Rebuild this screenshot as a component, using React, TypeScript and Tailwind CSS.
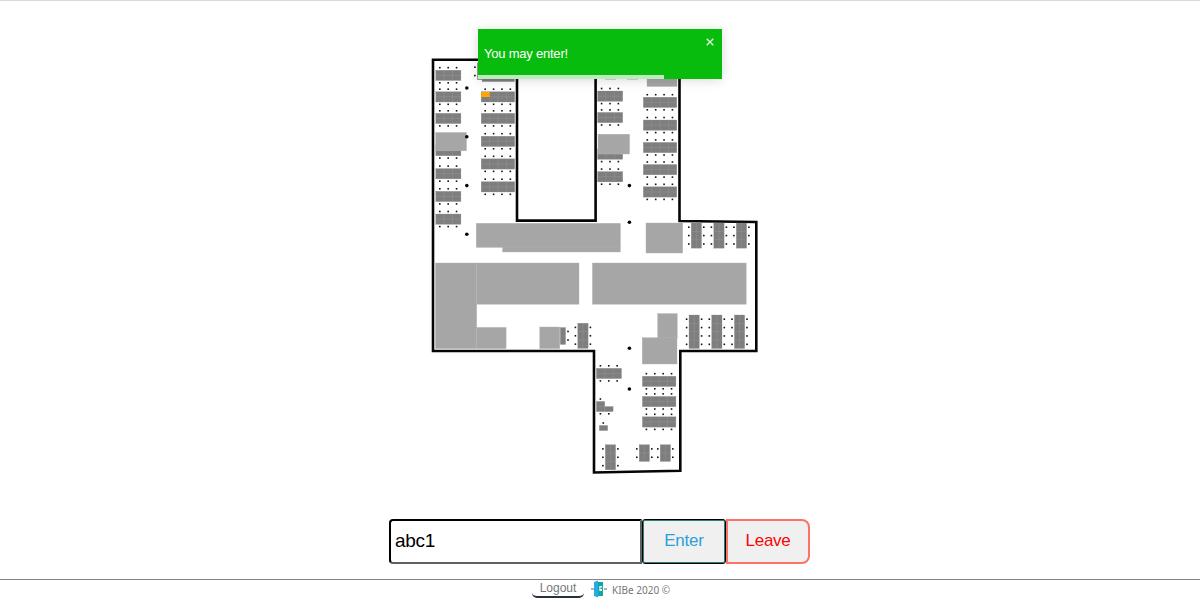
type Box = [x: number, y: number, w: number, h: number];

const wallPoints =
  "433,59.8 517,59.8 517,220.6 595.6,220.6 595.6,59.8 679.5,59.8 679.5,221 756.3,222 756.3,351 680.3,351 680.3,470.7 594,472.5 594,351 433,351";

const desks: { x: number; y: number; cols: number }[] = [
  ...[70.2, 91.7, 113.3, 145.5, 168.6, 191.3, 214].map((y) => ({ x: 435.8, y, cols: 3 })),
  ...[91.7, 113.3, 136.2, 158.8, 181.7].map((y) => ({ x: 481.2, y, cols: 4 })),
  ...[91, 112.4, 149, 171.6].map((y) => ({ x: 597.6, y, cols: 3 })),
  ...[97.2, 120, 142.4, 164.5, 186.8].map((y) => ({ x: 643.3, y, cols: 4 })),
  { x: 596.4, y: 368.3, cols: 3 },
  ...[376.2, 396.4, 416.8].map((y) => ({ x: 642.4, y, cols: 4 })),
];

const columns: { x: number; y: number; rows: number }[] = [
  { x: 477.3, y: 63, rows: 2 },
  ...[691.2, 713.8, 736.3].map((x) => ({ x, y: 223, rows: 3 })),
  ...[689, 711.7, 734.4].map((x) => ({ x, y: 315, rows: 4 })),
  { x: 577.8, y: 323.2, rows: 3 },
  { x: 605.3, y: 444.7, rows: 3 },
  { x: 639.2, y: 444.7, rows: 2 },
  { x: 660.2, y: 444.7, rows: 2 },
];

const rooms: Box[] = [
  [435.7, 132.5, 30.8, 18.3],
  [598, 134.2, 31.6, 19.8],
  [647, 66, 30, 20.5],
  [476.2, 223.3, 144.2, 24.1],
  [502.6, 247, 117.8, 5],
  [646, 223, 36.7, 30],
  [435.5, 263, 41.2, 85.6],
  [476.8, 263, 102.2, 41.2],
  [476.7, 327.4, 29.4, 21.2],
  [539.8, 327, 20, 21.6],
  [592.4, 263, 153.8, 41.2],
  [657.7, 313.6, 19.5, 24.6],
  [642.2, 337.7, 34.8, 26.3],
];

const smallDesks: Box[] = [
  [482, 71.4, 32.6, 10.2],
  [560.3, 327.5, 5.3, 17],
  [596.4, 401.4, 8.4, 10.2],
  [604.8, 406.5, 8.3, 5.1],
  [599.3, 425.4, 8.4, 5.2],
];

const looseSeats = [
  [568, 331.5], [568, 340], [600.4, 399], [600.4, 413.8], [608.8, 413.8], [603.3, 423],
];

const pillars = [
  [466.8, 88], [466.8, 136.7], [466.8, 185.6], [466.8, 234.3],
  [629.4, 185.6], [629.4, 222.3], [629.4, 348.3], [629.4, 389],
];

const step = 8.38;

function Seat({ x, y }: { x: number; y: number }) {
  return <rect x={x - 0.8} y={y - 0.8} width={1.6} height={1.6} fill="#111" />;
}

function Desk({ x, y, w, h, nx, ny }: { x: number; y: number; w: number; h: number; nx: number; ny: number }) {
  return (
    <g>
      <rect x={x} y={y} width={w} height={h} fill="#7e7e7e" stroke="#929292" strokeWidth={0.3} />
      {Array.from({ length: nx - 1 }, (_, i) => (
        <path key={"v" + i} d={`M${x + (w * (i + 1)) / nx} ${y}v${h}`} stroke="#a0a0a0" strokeWidth={0.35} />
      ))}
      {Array.from({ length: ny - 1 }, (_, i) => (
        <path key={"h" + i} d={`M${x} ${y + (h * (i + 1)) / ny}h${w}`} stroke="#a0a0a0" strokeWidth={0.35} />
      ))}
    </g>
  );
}

function FloorPlan() {
  return (
    <svg viewBox="425 50 340 430" width="340" height="430" className="block shrink-0">
      <polygon points={wallPoints} fill="#fff" stroke="#050505" strokeWidth={2.6} />
      {desks.map((d) => (
        <g key={`${d.x}-${d.y}`}>
          <Desk x={d.x} y={d.y} w={d.cols * step} h={10.3} nx={d.cols} ny={2} />
          {Array.from({ length: d.cols }, (_, i) => (
            <g key={i}>
              <Seat x={d.x + 4 + i * step} y={d.y - 2.5} />
              <Seat x={d.x + 4 + i * step} y={d.y + 12.6} />
            </g>
          ))}
        </g>
      ))}
      {columns.map((c) => (
        <g key={`${c.x}-${c.y}`}>
          <Desk x={c.x} y={c.y} w={10.3} h={c.rows * step} nx={2} ny={c.rows} />
          {Array.from({ length: c.rows }, (_, i) => (
            <g key={i}>
              <Seat x={c.x - 2.4} y={c.y + 4.2 + i * step} />
              <Seat x={c.x + 12.6} y={c.y + 4.2 + i * step} />
            </g>
          ))}
        </g>
      ))}
      {smallDesks.map(([x, y, w, h]) => (
        <Desk key={`${x}-${y}`} x={x} y={y} w={w} h={h} nx={1} ny={h > 8 ? 2 : 1} />
      ))}
      {rooms.map(([x, y, w, h]) => (
        <rect key={`${x}-${y}`} x={x} y={y} width={w} height={h} fill="#a6a6a6" stroke="#b3b3b3" strokeWidth={0.4} />
      ))}
      <path d="M605 79.2h11M627 79.2h11" stroke="#c4c4c4" strokeWidth={1} />
      {looseSeats.map(([x, y]) => (
        <Seat key={`${x}-${y}`} x={x} y={y} />
      ))}
      {pillars.map(([x, y]) => (
        <circle key={`${x}-${y}`} cx={x} cy={y} r={1.8} fill="#050505" />
      ))}
      <rect x={481.2} y={92} width={8.4} height={5} fill="#ffa500" />
    </svg>
  );
}

function Toast() {
  return (
    <div
      role="alert"
      className="absolute left-[478px] top-[28px] flex h-[50px] w-[244px] flex-col bg-[#07bc0c] text-white shadow-[0_1px_10px_0_rgba(0,0,0,0.1),0_2px_15px_0_rgba(0,0,0,0.05)]"
    >
      <div className="flex h-[46px] justify-between pl-[6px] pr-[8px]">
        <span className="pt-[16px] text-[13px] leading-[18px] tracking-[-0.22px]">You may enter!</span>
        <svg viewBox="0 0 8 8" className="mt-[9px] size-[8px]" aria-label="close">
          <path d="M.7.7l6.6 6.6M7.3.7L.7 7.3" stroke="#dcf6dd" strokeWidth="1.4" />
        </svg>
      </div>
      <div className="h-[4px] w-[186px] bg-[#bcebbd]" />
    </div>
  );
}

function DoorLogo() {
  return (
    <svg viewBox="0 0 16 18" className="h-[18px] w-[16px] shrink-0">
      <path d="M0 9h3M13 9h3" stroke="#929ba1" strokeWidth="1.3" />
      <path d="M6 2h6v14H6z" fill="#12a5a5" />
      <path d="M3 2l4-1.5v17L3 16z" fill="#29abe2" />
      <path d="M8.3 6h2.8v5H8.3z" fill="#e9f8f8" />
      <path d="M9.5 7.5h1.6V9H9.5z" fill="#12a5a5" />
    </svg>
  );
}

export default function App() {
  return (
    <div className="relative flex h-[600px] w-[1200px] flex-col overflow-hidden border-t border-[#dadada] bg-white font-['Liberation_Sans',Arial,sans-serif]">
      <main className="flex h-[578px] flex-col pt-[49px]">
        <div className="pl-[425px]">
          <FloorPlan />
        </div>
        <div className="ml-[389px] mt-[38px] flex h-[46px] items-center">
          <input
            defaultValue="abc1"
            className="h-[45px] w-[253px] rounded-l-[4px] border-2 border-b-[#606060] border-l-black border-r-[#606060] border-t-black bg-white pl-[4px] pr-1 text-[19px] tracking-[-0.3px] text-black outline-none"
          />
          <button className="h-[45px] w-[84px] rounded-[3px] border border-black bg-[#f0f0f0] text-[17px] tracking-[-0.2px] text-[#2d9fd9] shadow-[inset_0_0_0_1px_#2a8078]">
            Enter
          </button>
          <button className="h-[45px] w-[84px] rounded-r-[8px] border-2 border-[#fa7365] bg-[#f0f0f0] text-[17px] tracking-[-0.3px] text-[#fa0505]">
            Leave
          </button>
        </div>
      </main>
      <footer className="flex h-[21px] items-start border-t border-[#858585] pl-[532px] text-[#777]">
        <button className="h-[18px] w-[52px] rounded-[5px] border-b-2 border-[#27303d] text-[12px] leading-[15px]">
          Logout
        </button>
        <div className="ml-[7px]">
          <DoorLogo />
        </div>
        <span className="ml-[5px] pt-[3px] font-['Noto_Sans',sans-serif] text-[10px] leading-[14px]">KIBe 2020 ©</span>
      </footer>
      <Toast />
    </div>
  );
}
